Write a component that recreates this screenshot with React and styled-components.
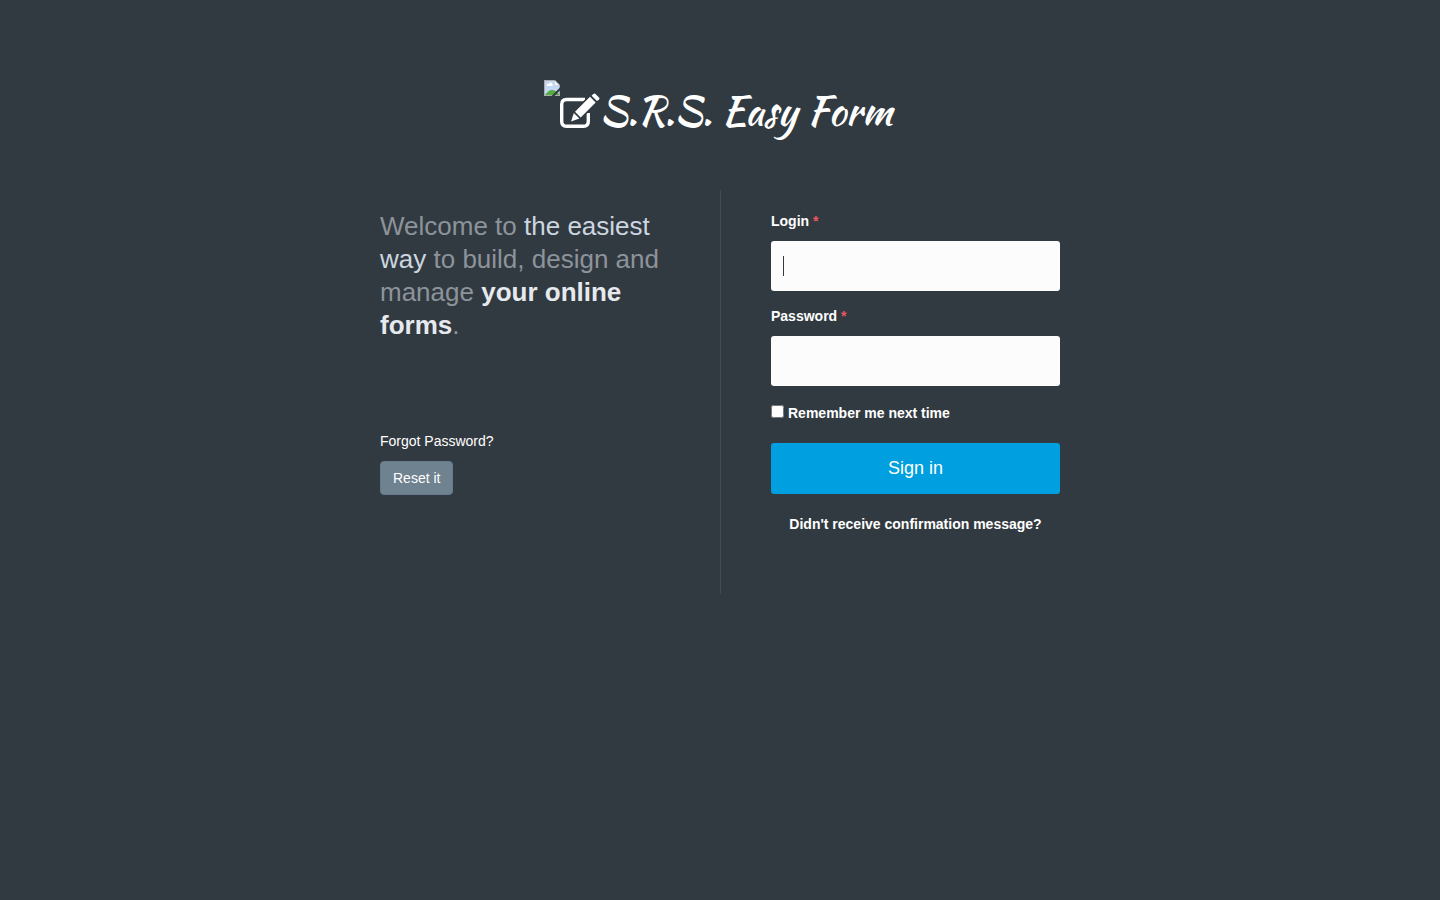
import React from "react";
import styled, { createGlobalStyle } from "styled-components";

const GlobalStyle = createGlobalStyle`
  *, *::before, *::after { box-sizing: border-box; }
  body {
    margin: 0;
    min-height: 100vh;
    background: #323a41;
    color: #ffffff;
    font-family: "Liberation Sans", Arial, sans-serif;
    font-size: 14px;
    line-height: 20px;
  }
`;

const Page = styled.div`
  max-width: 720px;
  margin: 0 auto;
  padding: 80px 20px 40px;
`;

const Brand = styled.h1`
  display: flex;
  justify-content: center;
  height: 60px;
  margin: 0 0 50px;
`;

const BrandLink = styled.a`
  display: flex;
  align-items: flex-start;
  padding-right: 4px;
  color: #ffffff;
  text-decoration: none;
`;

const BrandIcon = styled.svg`
  width: 40px;
  height: 36px;
  margin-top: 13px;
`;

const BrandName = styled.span`
  font-family: "Kaushan Script", Lato, sans-serif;
  font-size: 40px;
  font-weight: 400;
  line-height: 62px;
  white-space: nowrap;
`;

const Columns = styled.main`
  display: grid;
  grid-template-columns: 1fr 1fr;
`;

const Intro = styled.section`
  padding: 20px 50px 20px 0;
`;

const Welcome = styled.p`
  margin: 0 0 89px;
  color: #8d939b;
  font-size: 26px;
  line-height: 33px;
`;

const Highlight = styled.span`
  color: #ccd6e0;
`;

const Strong = styled.strong`
  color: #e6e9ee;
`;

const Hint = styled.p`
  margin: 0 0 10px;
`;

const ResetLink = styled.a`
  display: inline-block;
  padding: 6px 12px;
  border: 1px solid #667b8e;
  border-radius: 4px;
  background: #6f8290;
  color: #ffffff;
  text-decoration: none;
`;

const LoginForm = styled.form`
  padding: 21px 0 60px 50px;
  border-left: 1px solid #404c58;
`;

const Field = styled.div`
  margin-bottom: 15px;
`;

const Label = styled.label`
  display: block;
  margin-bottom: 10px;
  font-weight: 700;
`;

const Required = styled.span`
  color: #ed5565;
`;

const InputBox = styled.div`
  position: relative;
`;

const Caret = styled.span`
  position: absolute;
  top: 15px;
  left: 12px;
  width: 1px;
  height: 20px;
  background: #323a41;
  pointer-events: none;
`;

const TextInput = styled.input`
  display: block;
  width: 100%;
  height: 50px;
  padding: 10px 12px;
  border: 0;
  border-radius: 3px;
  outline: 0;
  background: #fcfcfc;
  color: #323a41;
  font: inherit;
  font-size: 18px;
`;

const RememberLabel = styled.label`
  display: flex;
  align-items: flex-start;
  gap: 4px;
  margin: 17px 0 20px;
  font-weight: 700;
`;

const Checkbox = styled.input`
  width: 13px;
  height: 13px;
  margin: 2px 0 0;
`;

const SubmitButton = styled.button`
  display: block;
  width: 100%;
  height: 51px;
  padding: 0 16px 2px;
  border: 0;
  border-radius: 3px;
  background: #009fdf;
  color: #ffffff;
  font: inherit;
  font-size: 18px;
  cursor: pointer;
`;

const ConfirmLink = styled.a`
  display: block;
  margin-top: 20px;
  color: #ffffff;
  font-weight: 700;
  text-align: center;
  text-decoration: none;
`;

function MissingPicture() {
  return (
    <svg width="16" height="16" viewBox="0 0 16 16" aria-hidden="true">
      <path d="M0 0H11L16 5V16H0Z" fill="#a9abad" />
      <path d="M1 1H11V5H15V15H1Z" fill="#c4d8f6" />
      <path d="M3 6C2 4 4 4 5 4C5 2 8 2 8 4C9 4 9 6 8 6Z" fill="#ffffff" />
      <path d="M1 15C3 12 5 10 8 10C11 10 13 12 15 14V15Z" fill="#54ad42" />
      <path d="M11 1L15 5H11Z" fill="#f5f5f5" />
      <path d="M17 8L8 17" fill="none" stroke="#323a41" strokeWidth="2" />
    </svg>
  );
}

function EditIcon() {
  return (
    <BrandIcon viewBox="0 0 40 36" aria-hidden="true">
      <path
        d="M25 6.5H6.5Q1.7 6.5 1.7 11.3V28.5Q1.7 33.3 6.5 33.3H23.5Q28.3 33.3 28.3 28.5V20"
        fill="none"
        stroke="currentColor"
        strokeWidth="3.4"
      />
      <path d="M29.5 3.5L36 10L21 25L14.5 18.5Z" fill="#323a41" stroke="#323a41" strokeWidth="2" />
      <path d="M30 3.8L35.7 9.5L20.7 24.5L15 18.8Z" fill="currentColor" />
      <path d="M13.8 20L19.4 25.6L11.1 28.5Z" fill="currentColor" />
      <path
        d="M31.6 2.7L33.3 1Q34.4 0 35.5 1L39 4.5Q40 5.6 39 6.7L36.9 8.1Z"
        fill="currentColor"
      />
    </BrandIcon>
  );
}

export default function App() {
  return (
    <>
      <GlobalStyle />
      <Page>
        <Brand>
          <BrandLink href="#">
            <MissingPicture />
            <EditIcon />
            <BrandName>S.R.S. Easy Form</BrandName>
          </BrandLink>
        </Brand>
        <Columns>
          <Intro>
            <Welcome>
              Welcome to <Highlight>the easiest way</Highlight> to build, design
              and manage <Strong>your online forms</Strong>.
            </Welcome>
            <Hint>Forgot Password?</Hint>
            <ResetLink href="#">Reset it</ResetLink>
          </Intro>
          <LoginForm onSubmit={(event) => event.preventDefault()}>
            <Field>
              <Label htmlFor="login">
                Login <Required>*</Required>
              </Label>
              <InputBox>
                <TextInput id="login" type="text" />
                <Caret aria-hidden="true" />
              </InputBox>
            </Field>
            <Field>
              <Label htmlFor="password">
                Password <Required>*</Required>
              </Label>
              <TextInput id="password" type="password" />
            </Field>
            <RememberLabel htmlFor="remember">
              <Checkbox id="remember" type="checkbox" />
              Remember me next time
            </RememberLabel>
            <SubmitButton type="submit">Sign in</SubmitButton>
            <ConfirmLink href="#">Didn't receive confirmation message?</ConfirmLink>
          </LoginForm>
        </Columns>
      </Page>
    </>
  );
}
